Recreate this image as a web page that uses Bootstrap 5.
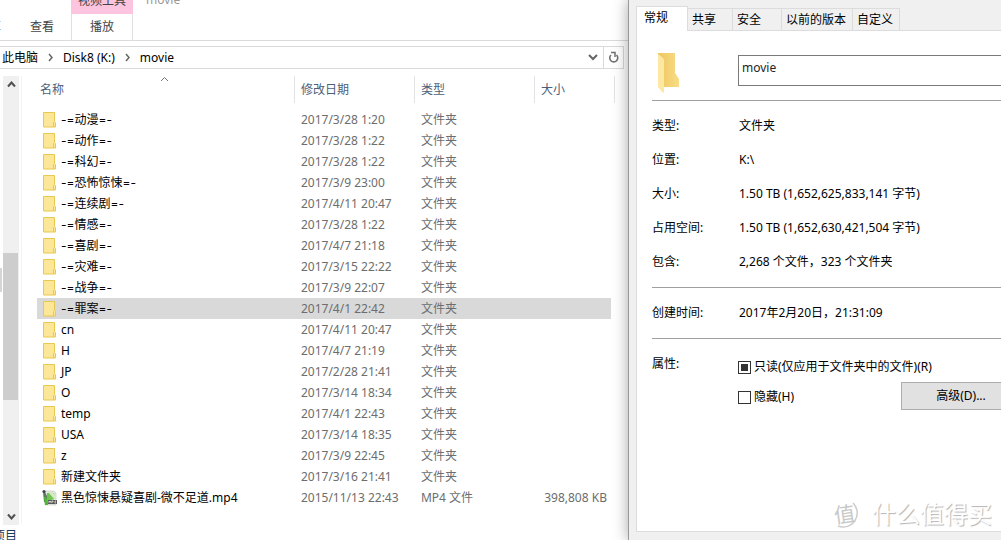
<!DOCTYPE html>
<html lang="zh-CN">
<head>
<meta charset="utf-8">
<meta name="viewport" content="width=device-width, initial-scale=1">
<title>movie</title>
<link href="https://cdn.jsdelivr.net/npm/bootstrap@5.3.0/dist/css/bootstrap.min.css" rel="stylesheet">
<style>
body{font:12px/20px "Noto Sans","Noto Sans CJK SC",sans-serif;color:#000;background:#fff}
a{color:inherit;text-decoration:none}
.explorer{flex:628 1 0}
.dialog-pane{flex:372 1 0;background:#f0f0f0;border-left:1px solid #999;box-shadow:0 0 14px rgba(0,0,0,.35);z-index:1}
/* ribbon */
.ribbon{height:41px;border-bottom:1px solid #dadbdc;color:#444}
.ribbon-tab{height:27px;line-height:26px}
.ribbon-left{padding-top:14px}
.tab-share{width:1px;direction:rtl}
.tab-view{padding:0 17px 0 29px}
.tool-title{height:14px;line-height:2px;background:#fcc4df;overflow:hidden}
.tool-group{width:62px}
.tool-group .ribbon-tab{border:1px solid #e0e0e0;border-width:0 1px}
.window-title{height:14px;line-height:0;padding-left:13px;color:#999;overflow:hidden}
/* address bar */
.address{height:23px;margin:5px 4px 7px 0;padding-left:2px;border:1px solid #d9d9d9;border-left:0;line-height:21px}
.address svg{flex:none}
.address button{height:21px;border:0;background:none;padding:0;width:20px;line-height:0}
.address .refresh{border-left:1px solid #d9d9d9}
/* navigation pane edge and scroll bar */
.nav-edge{flex:0 0 3px;padding-top:192px}
.nav-edge div{width:2px;height:24px;background:#d5d5d5}
.scroller{flex:0 0 16px;background:#f0f0f0}
.scroller button{height:17px;border:0;padding:0;background:none;line-height:0}
.scroller .thumb{flex:0 0 147px;background:#cdcdcd;width:15px}
.track-above{flex:160 1 0}
.track-below{flex:108 1 0}
.file-area{border-left:1px solid #f3f3f3;margin-left:2px;padding:0 17px 0 15px;height:449px}
/* file list */
.files{table-layout:fixed;color:#6d6d6d;width:100%}
.files th{font-weight:400;color:#4c607a;padding:0}
.head-cell{height:27px;line-height:27px;margin-bottom:6px;padding-left:6px;border-left:1px solid #e2e3e5;position:relative}
.files th:first-child .head-cell{border:0;padding-left:3px}
.files th:last-child .head-cell::after{content:"";position:absolute;right:-4px;top:0;width:1px;height:27px;background:#e2e3e5}
.sort-mark{position:absolute;top:0;left:123px}
.files td{height:21px;line-height:21px;padding:0 0 0 7px;white-space:nowrap}
.files td:first-child{color:#000;padding-left:5px}
.files td:last-child{text-align:right;padding-right:4px}
.files .selected{background:#d9d9d9}
.file-icon{width:15px;height:17px;margin-right:4px;vertical-align:-4px}
.dash{font-family:Inter,sans-serif}
.status{height:15px;line-height:22px;color:#1e395b;overflow:hidden}
.status span{margin-left:-7px}
/* properties dialog */
.dialog-body{margin-right:-33px;padding:6px 0 8px 7px}
.prop-tabs{height:25px;position:relative;z-index:1}
.prop-tabs button{border:1px solid #dcdcdc;border-left:0;background:#f0f0f0;height:23px;padding:0 4px;line-height:21px;text-align:left;white-space:nowrap}
.prop-tabs .current{background:#fff;height:25px;width:52px;border:1px solid #dcdcdc;border-bottom:0;padding:0 0 3px 7px}
.tab-a{width:45px}
.tab-b{width:49px}
.tab-c{width:71px}
.tab-d{width:47px}
.sheet{border:1px solid #dcdcdc;background:#fff;margin-top:-1px;padding:22px 12px 0 15px;height:502px}
.name-row{height:47px}
.name-row svg{margin:0 58px 0 5px}
.name-row input{height:31px;margin-top:2px;border:1px solid #7a7a7a;border-radius:0;padding:0 3px 7px;min-width:0}
.rule{border-top:1px solid #a0a0a0}
.facts{display:grid;grid-template-columns:87px 1fr;margin:0;padding:8px 0}
.facts dt,.facts dd{font-weight:400;margin:0;height:34px;line-height:34px;white-space:nowrap}
.attributes{padding-top:15px}
.attr-label{width:86px}
.check-line{height:30px;line-height:22px;padding-bottom:4px}
.check-line input{appearance:none;width:13px;height:13px;border:1px solid #333;margin:0 3px 0 0;flex:none;background:#fff}
.check-line input:indeterminate{background:#333;box-shadow:inset 0 0 0 2px #fff}
.advanced{width:120px;height:28px;border:1px solid #adadad;background:#e1e1e1;padding:0;margin-top:-2px}
.watermark{position:absolute;right:9px;bottom:10px;gap:11px;font-size:24px;line-height:32px;color:#fff;text-shadow:1px 1px 1px #b4b4b4}
.watermark text{text-shadow:none}
</style>
</head>
<body>
<div class="d-flex vh-100 overflow-hidden">
<main class="explorer d-flex flex-column overflow-hidden">
  <nav class="ribbon d-flex align-items-start flex-shrink-0">
    <div class="ribbon-left d-flex">
      <a href="#" class="ribbon-tab tab-share overflow-hidden text-nowrap">共享</a>
      <a href="#" class="ribbon-tab tab-view">查看</a>
    </div>
    <div class="tool-group text-center">
      <div class="tool-title">视频工具</div>
      <a href="#" class="ribbon-tab d-block">播放</a>
    </div>
    <div class="window-title">movie</div>
  </nav>
  <div class="address d-flex align-items-center flex-shrink-0">
    <a href="#">此电脑</a>
    <svg width="25" height="9"><path d="M11 1l3 3.500-3 3.500" fill="none" stroke="#666" stroke-width="1.500"/></svg>
    <a href="#">Disk8 (K:)</a>
    <svg width="25" height="9"><path d="M11 1l3 3.500-3 3.500" fill="none" stroke="#666" stroke-width="1.500"/></svg>
    <a href="#">movie</a>
    <button type="button" class="ms-auto" aria-label="历史记录"><svg width="10" height="7"><path d="M1 1l4 4 4-4" fill="none" stroke="#666" stroke-width="2"/></svg></button>
    <button type="button" class="refresh" aria-label="刷新"><svg width="12" height="13"><path d="M3 4A4 4 0 1 0 8.500 4" fill="none" stroke="#707070" stroke-width="1.600"/><path d="M3 1.500H7V6" fill="none" stroke="#707070" stroke-width="1.500"/></svg></button>
  </div>
  <div class="d-flex">
    <div class="nav-edge"><div></div></div>
    <div class="scroller d-flex flex-column">
      <button type="button" aria-label="向上滚动"><svg width="9" height="7"><path d="M1 5.500l3.500-4 3.500 4" fill="none" stroke="#505050" stroke-width="2"/></svg></button>
      <div class="track-above"></div><div class="thumb"></div><div class="track-below"></div>
      <button type="button" aria-label="向下滚动"><svg width="9" height="7"><path d="M1 1.500l3.500 4 3.500-4" fill="none" stroke="#505050" stroke-width="2"/></svg></button>
    </div>
    <div class="file-area flex-fill">
      <table class="files">
        <colgroup><col><col style="width:120px"><col style="width:120px"><col style="width:77px"></colgroup>
        <thead><tr>
          <th><div class="head-cell">名称<svg class="sort-mark" width="9" height="6"><path d="M1 5l3.500-3.500L8 5" fill="none" stroke="#777"/></svg></div></th>
          <th><div class="head-cell">修改日期</div></th><th><div class="head-cell">类型</div></th><th><div class="head-cell">大小</div></th>
        </tr></thead>
        <tbody id="rows"></tbody>
      </table>
    </div>
  </div>
  <footer class="status"><span>项目</span></footer>
</main>
<aside class="dialog-pane position-relative overflow-hidden">
  <div class="dialog-body">
    <div class="prop-tabs d-flex align-items-end">
      <button type="button" class="current">常规</button>
      <button type="button" class="tab-a">共享</button>
      <button type="button" class="tab-b">安全</button>
      <button type="button" class="tab-c">以前的版本</button>
      <button type="button" class="tab-d">自定义</button>
    </div>
    <div class="sheet">
      <div class="name-row d-flex">
        <svg class="flex-shrink-0" width="23" height="41" viewBox="0 0 23 41"><defs><linearGradient id="fold"><stop offset="0" stop-color="#eec75f"/><stop offset="1" stop-color="#f8dc86"/></linearGradient></defs><path d="M1 0h17v20l4 6v8H1z" fill="url(#fold)"/><path d="M1 1l5 4q1 1 1 3v31l-1 1-5-6z" fill="#fde8a3"/></svg>
        <input type="text" class="form-control-plaintext flex-grow-1" aria-label="名称" value="movie">
      </div>
      <div class="rule"></div>
      <dl class="facts">
        <dt>类型:</dt><dd>文件夹</dd>
        <dt>位置:</dt><dd>K:\</dd>
        <dt>大小:</dt><dd>1.50 TB (1,652,625,833,141 字节)</dd>
        <dt>占用空间:</dt><dd>1.50 TB (1,652,630,421,504 字节)</dd>
        <dt>包含:</dt><dd>2,268 个文件，323 个文件夹</dd>
      </dl>
      <div class="rule"></div>
      <dl class="facts"><dt>创建时间:</dt><dd>2017年2月20日，21:31:09</dd></dl>
      <div class="rule"></div>
      <div class="attributes d-flex">
        <div class="attr-label flex-shrink-0">属性:</div>
        <div class="flex-grow-1">
          <label class="check-line d-flex align-items-center text-nowrap"><input type="checkbox" id="readonly">只读(仅应用于文件夹中的文件)(R)</label>
          <div class="d-flex justify-content-between">
            <label class="check-line d-flex align-items-center"><input type="checkbox">隐藏(H)</label>
            <button type="button" class="advanced">高级(D)...</button>
          </div>
        </div>
      </div>
    </div>
  </div>
  <div class="watermark d-flex align-items-center">
    <svg width="32" height="32" viewBox="0 0 32 32"><path d="M24 5A14 14 0 0 1 9 28" fill="none" stroke="#ccc" stroke-width="1.500"/><text x="5" y="24" font-size="21" fill="#c8c8c8" transform="rotate(-8 16 16)">值</text></svg>
    <span>什么值得买</span>
  </div>
</aside>
</div>
<script>
const folders=[['-=动漫=-','2017/3/28 1:20'],['-=动作=-','2017/3/28 1:22'],['-=科幻=-','2017/3/28 1:22'],['-=恐怖惊悚=-','2017/3/9 23:00'],['-=连续剧=-','2017/4/11 20:47'],['-=情感=-','2017/3/28 1:22'],['-=喜剧=-','2017/4/7 21:18'],['-=灾难=-','2017/3/15 22:22'],['-=战争=-','2017/3/9 22:07'],['-=罪案=-','2017/4/1 22:42'],['cn','2017/4/11 20:47'],['H','2017/4/7 21:19'],['JP','2017/2/28 21:41'],['O','2017/3/14 18:34'],['temp','2017/4/1 22:43'],['USA','2017/3/14 18:35'],['z','2017/3/9 22:45'],['新建文件夹','2017/3/16 21:41']];
const folderIcon='<svg class="file-icon" viewBox="0 0 15 17"><path d="M1.500 1.500h11v9l1 1v4.500h-12z" fill="#fce697" stroke="#e8c94f"/><path d="M11.500 16v-4.500l1-1" fill="none" stroke="#e8c94f"/></svg>';
const videoIcon='<svg class="file-icon" viewBox="0 0 15 17"><path d="M3 2h9l2 2v12H3z" fill="#e4ebe1" stroke="#b5bdb2" stroke-width=".5"/><path d="M5 4h7l1 6-8 2z" fill="#74c254"/><path d="M6 3l7 8 1-4-4-4z" fill="#d3ecc4"/><path d="M1 3h2l2 4v6H2z" fill="#5b7a5e"/><circle cx="2" cy="2.500" r="1.600" fill="#445"/><path d="M2 8h2l2 5v3H3z" fill="#4fb83a"/><path d="M6 11h9v4H6z" fill="#5a5a5a"/><path d="M7 14v-2l1 1 1-1v2M10 14v-2h1v1M14 12h-1v2h1" fill="none" stroke="#fff" stroke-width=".6"/></svg>';
const label=n=>n.replace(/-=|=-/g,'<span class="dash">$&</span>');
const row=(icon,n,d,t,s,i)=>`<tr${i===9?' class="selected"':''}><td>${icon}${label(n)}</td><td>${d}</td><td>${t}</td><td>${s}</td></tr>`;
document.getElementById('rows').innerHTML=folders.map((f,i)=>row(folderIcon,f[0],f[1],'文件夹','',i)).join('')+row(videoIcon,'黑色惊悚悬疑喜剧-微不足道.mp4','2015/11/13 22:43','MP4 文件','398,808 KB');
document.getElementById('readonly').indeterminate=true;
</script>
<script src="https://cdn.jsdelivr.net/npm/bootstrap@5.3.0/dist/js/bootstrap.bundle.min.js"></script>
</body>
</html>
